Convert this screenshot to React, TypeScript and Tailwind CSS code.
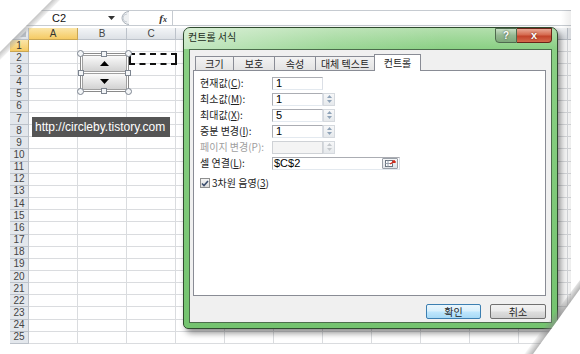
import React from "react";

const COLS = ["A", "B", "C", "D", "E", "F", "G", "H", "I", "J", "K"];
const SHOWN = ["A", "B", "C"];
const ROWS = Array.from({ length: 25 }, (_, i) => i + 1);

function Spin({ disabled }: { disabled?: boolean }) {
  const c = disabled ? "#c4c8cc" : "#8fa3b8";
  return (
    <div className="w-[12px] h-[13px] border border-[#d5d9de] bg-[linear-gradient(180deg,#f7f8f9,#e6e9ec)] flex flex-col items-center justify-center gap-[2px]">
      <svg width="5" height="3" viewBox="0 0 5 3">
        <path d="M0 3 L2.5 0 L5 3 Z" fill={c} />
      </svg>
      <svg width="5" height="3" viewBox="0 0 5 3">
        <path d="M0 0 L2.5 3 L5 0 Z" fill={c} />
      </svg>
    </div>
  );
}

function Field({ value, spin, disabled }: { value?: string; spin?: boolean; disabled?: boolean }) {
  return (
    <div className="flex items-center">
      <div
        className={
          disabled
            ? "w-[51px] h-[13px] border border-[#cfd2d6] bg-[#f4f4f4]"
            : "w-[51px] h-[13px] border border-[#abadb3] border-b-[#e3e9ef] border-r-[#dbdfe6] bg-white flex items-center pl-[3px] text-[11px] leading-none text-black [font-family:'Liberation_Sans',Arial,sans-serif]"
        }
      >
        {value}
      </div>
      {spin && <Spin disabled={disabled} />}
    </div>
  );
}

export default function App() {
  return (
    <div className="relative w-[580px] h-[354px] overflow-hidden bg-white [font-family:'Noto_Sans_CJK_KR','Noto_Sans',sans-serif] text-[#222]">
      {/* Spreadsheet */}
      <div className="pt-[10px] pl-[10px] w-[571px] [font-family:'Liberation_Sans',Arial,sans-serif]">
        {/* formula bar */}
        <div className="flex h-[16px] border-y border-[#c6cbd1] items-center bg-white">
          <div className="w-[108px] flex items-center pl-[42px] pr-[3px] text-[11px] leading-none text-[#111]">
            <span>C2</span>
            <svg className="ml-auto" width="7" height="4" viewBox="0 0 7 4">
              <path d="M0 0 L7 0 L3.5 4 Z" fill="#333" />
            </svg>
          </div>
          <svg width="12" height="14" viewBox="0 0 12 14">
            <path d="M11 0.5 A7 6.5 0 0 0 11 13.5" fill="#eef0f2" stroke="#aab1b9" strokeWidth="1" />
            <path d="M9 3 A4 4 0 0 0 9 11" fill="none" stroke="#c8ced5" strokeWidth="1" />
          </svg>
          <div className="w-[42px] flex justify-end pr-[5px] italic font-bold text-[11px] leading-none text-[#333] [font-family:'Liberation_Serif',serif]">
            f<span className="text-[8px] mt-[3px]">x</span>
          </div>
          <div className="flex-1 h-full border-l border-[#c6cbd1] bg-white" />
        </div>
        {/* column header */}
        <div className="flex h-[12px] mt-[2px] text-[10px] leading-none">
          <div className="w-[19px] shrink-0 border-r border-b border-[#b9bfc7] bg-[linear-gradient(180deg,#f2f4f6,#dfe3e8)] flex items-end justify-end pr-[2px] pb-[2px]">
            <svg width="6" height="6" viewBox="0 0 6 6">
              <path d="M6 0 L6 6 L0 6 Z" fill="#b8bec6" />
            </svg>
          </div>
          {COLS.map((c) => (
            <div
              key={c}
              className={
                c === "A"
                  ? "w-[49px] shrink-0 border-r border-b border-[#c9a653] bg-[linear-gradient(180deg,#fbe6a9,#f5ca63)] flex items-center justify-center text-[#333]"
                  : "w-[49px] shrink-0 border-r border-b border-[#bcc2ca] bg-[linear-gradient(180deg,#f3f5f7,#dde1e6)] flex items-center justify-center text-[#444]"
              }
            >
              {SHOWN.includes(c) ? c : null}
            </div>
          ))}
          <div className="flex-1 border-b border-[#bcc2ca] bg-[#e6e9ed]" />
        </div>
        {/* rows */}
        {ROWS.map((r) => (
          <div key={r} className="flex h-[12.16px]">
            <div
              className={
                r === 1
                  ? "w-[19px] shrink-0 border-r border-b border-[#c9a653] bg-[linear-gradient(180deg,#fbe6a9,#f5ca63)] flex items-center justify-center text-[10px] leading-none text-[#333]"
                  : "w-[19px] shrink-0 border-r border-b border-[#bcc2ca] bg-[#e3e7ec] flex items-center justify-center text-[10px] leading-none text-[#444]"
              }
            >
              {r}
            </div>
            {COLS.map((c) => (
              <div key={c} className="w-[49px] shrink-0 border-r border-b border-[#dadcdf]" />
            ))}
            <div className="flex-1 border-b border-[#dadcdf]" />
          </div>
        ))}
      </div>

      {/* right-edge shade of sheet */}
      <div className="absolute left-[561px] top-[10px] w-[10px] h-[334px] bg-[linear-gradient(90deg,rgba(0,0,0,0),rgba(0,0,0,0.07))]" />

      {/* marching ants around C2 */}
      <div className="absolute left-[129px] top-[53px] w-[48px] h-[12px] border-2 border-dashed border-[#111]" />

      {/* spin button form control */}
      <div className="absolute left-[80px] top-[53px] w-[49px] h-[39px] border border-[#8a8a8a] bg-white">
        <div className="flex flex-col h-full p-[1px] gap-[1px]">
          <div className="flex-1 border border-[#a0a0a0] rounded-[1px] bg-[linear-gradient(180deg,#fafafa,#e4e4e4_55%,#d2d2d2)] flex items-center justify-center">
            <svg width="9" height="5" viewBox="0 0 9 5">
              <path d="M0 5 L4.5 0 L9 5 Z" fill="#000" />
            </svg>
          </div>
          <div className="flex-1 border border-[#a0a0a0] rounded-[1px] bg-[linear-gradient(180deg,#fafafa,#e4e4e4_55%,#d2d2d2)] flex items-center justify-center">
            <svg width="9" height="5" viewBox="0 0 9 5">
              <path d="M0 0 L4.5 5 L9 0 Z" fill="#000" />
            </svg>
          </div>
        </div>
        {/* handles */}
        <div className="absolute -left-[4px] -top-[4px] w-[7px] h-[7px] rounded-full border border-[#7d8590] bg-[#f4f6f8]" />
        <div className="absolute -right-[4px] -top-[4px] w-[7px] h-[7px] rounded-full border border-[#7d8590] bg-[#f4f6f8]" />
        <div className="absolute -left-[4px] -bottom-[4px] w-[7px] h-[7px] rounded-full border border-[#7d8590] bg-[#f4f6f8]" />
        <div className="absolute -right-[4px] -bottom-[4px] w-[7px] h-[7px] rounded-full border border-[#7d8590] bg-[#f4f6f8]" />
        <div className="absolute left-[20px] -top-[3px] w-[6px] h-[6px] border border-[#7d8590] bg-[#f4f6f8]" />
        <div className="absolute left-[20px] -bottom-[3px] w-[6px] h-[6px] border border-[#7d8590] bg-[#f4f6f8]" />
        <div className="absolute -left-[3px] top-[16px] w-[6px] h-[6px] border border-[#7d8590] bg-[#f4f6f8]" />
        <div className="absolute -right-[3px] top-[16px] w-[6px] h-[6px] border border-[#7d8590] bg-[#f4f6f8]" />
      </div>

      {/* url label */}
      <div className="absolute left-[32px] top-[117px] w-[138px] h-[20px] bg-[#555555] text-white text-[12px] leading-none flex items-center pl-[3px] [font-family:'Liberation_Sans',Arial,sans-serif]">
        http://circleby.tistory.com
      </div>

      {/* dialog */}
      <div className="absolute left-[183px] top-[27px] w-[375px] h-[302px] rounded-t-[7px] rounded-b-[5px] border border-[#2f4a2e] bg-[linear-gradient(180deg,#b3dfad_0%,#8ad084_7%,#74c36f_100%)] shadow-[3px_4px_6px_rgba(0,0,0,0.45)] flex flex-col">
        <div className="h-[21px] flex items-start bg-[linear-gradient(90deg,rgba(255,255,255,0.5),rgba(255,255,255,0.15)_40%,rgba(255,255,255,0)_70%)] rounded-t-[6px]">
          <span className="pl-[4px] pt-[4px] text-[10px] leading-none text-[#1a2c1a]">컨트롤 서식</span>
          <div className="ml-auto mr-[5px] flex h-[15px]">
            <div className="w-[22px] h-full border border-[#4f6a4e] rounded-bl-[4px] bg-[linear-gradient(180deg,#c9dfc6,#94b891_50%,#7ea87b)] flex items-center justify-center text-[10px] leading-none font-bold text-white [font-family:'Liberation_Sans',Arial,sans-serif] [text-shadow:0_0_2px_#2c3e2c]">
              ?
            </div>
            <div className="w-[35px] h-full border border-[#6a2418] border-l-0 rounded-br-[4px] bg-[linear-gradient(180deg,#e9a996,#d56a4f_45%,#c2432a_55%,#d46a4c)] flex items-center justify-center text-[11px] leading-none font-bold text-white [font-family:'Liberation_Sans',Arial,sans-serif] [text-shadow:0_0_2px_#5a1a10]">
              x
            </div>
          </div>
        </div>
        <div className="mx-[5px] mb-[5px] flex-1 border border-[#4c6d4c] bg-[#f0f0f0] flex flex-col">
          {/* tabs */}
          <div className="pt-[4px] pl-[5px] flex items-end h-[20px] text-[10px] leading-none">
            <div className="w-[39px] h-[14px] border border-b-0 border-[#898c95] bg-[linear-gradient(180deg,#f3f3f3,#e3e3e3)] flex items-center justify-center">크기</div>
            <div className="w-[42px] -ml-px h-[14px] border border-b-0 border-[#898c95] bg-[linear-gradient(180deg,#f3f3f3,#e3e3e3)] flex items-center justify-center">보호</div>
            <div className="w-[42px] -ml-px h-[14px] border border-b-0 border-[#898c95] bg-[linear-gradient(180deg,#f3f3f3,#e3e3e3)] flex items-center justify-center">속성</div>
            <div className="w-[60px] -ml-px h-[14px] border border-b-0 border-[#898c95] bg-[linear-gradient(180deg,#f3f3f3,#e3e3e3)] flex items-center justify-center">대체 텍스트</div>
            <div className="relative z-10 w-[47px] -ml-px h-[17px] -mb-px border border-b-0 border-[#898c95] bg-white flex items-center justify-center pb-[1px]">컨트롤</div>
          </div>
          {/* panel */}
          <div className="ml-[3px] mr-[5px] h-[226px] border border-[#898c95] bg-white pt-[4px] pl-[6px] text-[10px] leading-none">
            <div className="flex h-[16px] items-center">
              <div className="w-[72px]">현재값(<u>C</u>):</div>
              <Field value="1" />
            </div>
            <div className="flex h-[16px] items-center">
              <div className="w-[72px]">최소값(<u>M</u>):</div>
              <Field value="1" spin />
            </div>
            <div className="flex h-[16px] items-center">
              <div className="w-[72px]">최대값(<u>X</u>):</div>
              <Field value="5" spin />
            </div>
            <div className="flex h-[16px] items-center">
              <div className="w-[72px]">증분 변경(<u>I</u>):</div>
              <Field value="1" spin />
            </div>
            <div className="flex h-[16px] items-center">
              <div className="w-[72px] text-[#a0a0a0]">페이지 변경(P):</div>
              <Field spin disabled />
            </div>
            <div className="flex h-[16px] items-center">
              <div className="w-[72px]">셀 연결(<u>L</u>):</div>
              <div className="w-[128px] h-[13px] border border-[#abadb3] border-b-[#e3e9ef] border-r-[#dbdfe6] bg-white flex items-center pl-[1px] text-[11px] leading-none text-black [font-family:'Liberation_Sans',Arial,sans-serif]">
                $C$2
                <div className="ml-auto mr-px w-[16px] h-[11px] border border-[#9aa0a8] rounded-[1px] bg-[linear-gradient(180deg,#f6f7f8,#dfe2e6)] flex items-center justify-center">
                  <svg width="11" height="7" viewBox="0 0 11 7">
                    <rect x="0.5" y="0.5" width="7" height="6" fill="#fff" stroke="#6a7480" />
                    <path d="M0.5 3.5 H7.5 M3 0.5 V6.5" stroke="#9aa4b0" />
                    <path d="M5 4 L10 1 M10 1 L7.5 1 M10 1 L10 3" stroke="#d12a1a" strokeWidth="1.3" fill="none" />
                  </svg>
                </div>
              </div>
            </div>
            <div className="flex h-[16px] items-center mt-[4px]">
              <div className="w-[10px] h-[10px] border border-[#8e8f8f] bg-[linear-gradient(180deg,#f4f4f4,#dcdcdc)] flex items-center justify-center">
                <svg width="8" height="7" viewBox="0 0 8 7">
                  <path d="M1 3.5 L3 5.5 L7 1" stroke="#3b4e6e" strokeWidth="1.6" fill="none" />
                </svg>
              </div>
              <span className="ml-[2px]">3차원 음영(<u>3</u>)</span>
            </div>
          </div>
          {/* buttons */}
          <div className="mt-[8px] mr-[5px] flex justify-end gap-[9px] text-[10px] leading-none">
            <div className="w-[55px] h-[15px] rounded-[2px] border border-[#3c7fb1] bg-[linear-gradient(180deg,#eaf6fd_0%,#d9f0fc_45%,#bee6fd_55%,#a7d9f5_100%)] flex items-center justify-center">확인</div>
            <div className="w-[56px] h-[15px] rounded-[2px] border border-[#707070] bg-[linear-gradient(180deg,#f2f2f2_0%,#ebebeb_45%,#dddddd_55%,#cfcfcf_100%)] flex items-center justify-center">취소</div>
          </div>
        </div>
      </div>

      {/* page curl: top-left */}
      <svg className="absolute left-0 top-0" width="70" height="70" viewBox="0 0 70 70">
        <defs>
          <linearGradient id="tlg" gradientUnits="userSpaceOnUse" x1="25" y1="25" x2="31" y2="31">
            <stop offset="0" stopColor="#9a9a9a" stopOpacity="0.7" />
            <stop offset="1" stopColor="#9a9a9a" stopOpacity="0" />
          </linearGradient>
        </defs>
        <polygon points="0,0 52,0 0,52" fill="#fff" />
        <polygon points="52,0 60,0 0,60 0,52" fill="url(#tlg)" />
      </svg>

      {/* page curl: bottom-right */}
      <svg className="absolute left-[520px] top-[280px]" width="60" height="74" viewBox="520 280 60 74">
        <defs>
          <linearGradient id="brg" gradientUnits="userSpaceOnUse" x1="557" y1="322" x2="550" y2="317">
            <stop offset="0" stopColor="#8a8a8a" stopOpacity="0.7" />
            <stop offset="1" stopColor="#8a8a8a" stopOpacity="0" />
          </linearGradient>
        </defs>
        <polygon points="580,289 580,354 533,354" fill="#fff" />
        <polygon points="580,289 533,354 524,354 580,280" fill="url(#brg)" />
      </svg>
    </div>
  );
}
